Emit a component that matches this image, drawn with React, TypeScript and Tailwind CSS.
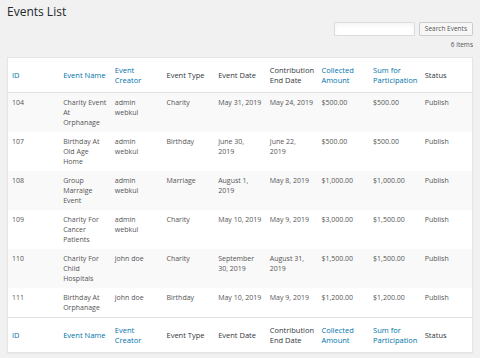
import React from 'react';

interface EventRow {
  id: string,
  name: string,
  creator: string,
  type: string,
  date: string,
  endDate: string,
  collected: string,
  sum: string,
  status: string,
}

const rows: EventRow[] = [
  {id: '104', name: 'Charity Event At Orphanage', creator: 'admin webkul', type: 'Charity', date: 'May 31, 2019', endDate: 'May 24, 2019', collected: '$500.00', sum: '$500.00', status: 'Publish'},
  {id: '107', name: 'Birthday At Old Age Home', creator: 'admin webkul', type: 'Birthday', date: 'June 30, 2019', endDate: 'June 22, 2019', collected: '$500.00', sum: '$500.00', status: 'Publish'},
  {id: '108', name: 'Group Marraige Event', creator: 'admin webkul', type: 'Marriage', date: 'August 1, 2019', endDate: 'May 8, 2019', collected: '$1,000.00', sum: '$1,000.00', status: 'Publish'},
  {id: '109', name: 'Charity For Cancer Patients', creator: 'admin webkul', type: 'Charity', date: 'May 10, 2019', endDate: 'May 9, 2019', collected: '$3,000.00', sum: '$1,500.00', status: 'Publish'},
  {id: '110', name: 'Charity For Child Hospitals', creator: 'john doe', type: 'Charity', date: 'September 30, 2019', endDate: 'August 31, 2019', collected: '$1,500.00', sum: '$1,500.00', status: 'Publish'},
  {id: '111', name: 'Birthday At Orphanage', creator: 'john doe', type: 'Birthday', date: 'May 10, 2019', endDate: 'May 9, 2019', collected: '$1,200.00', sum: '$1,200.00', status: 'Publish'},
];

const columns: { label: string, link: boolean }[] = [
  {label: 'ID', link: true},
  {label: 'Event Name', link: true},
  {label: 'Event Creator', link: true},
  {label: 'Event Type', link: false},
  {label: 'Event Date', link: false},
  {label: 'Contribution End Date', link: false},
  {label: 'Collected Amount', link: true},
  {label: 'Sum for Participation', link: true},
  {label: 'Status', link: false},
];

const HeaderRow = () => (
  <tr>
    {columns.map(col => (
      <th key={col.label}
          className={`h-[35px] px-[4px] text-left align-middle font-normal text-[7.5px] leading-[10px] ${col.link ? 'text-[#0073aa]' : 'text-[#32373c]'}`}>
        {col.label}
      </th>
    ))}
  </tr>
);

const App: React.FC = () => {
  return (
    <div className="w-[480px] h-[358px] bg-[#f1f1f1] px-[7px] pt-[5px] font-['Open_Sans',sans-serif] overflow-hidden">
      <h1 className="text-[12px] leading-[14px] text-[#23282d] font-normal">Events List</h1>

      <div className="flex justify-end items-center gap-[4px] mt-[3px]">
        <input type="text" className="w-[81px] h-[14px] bg-white border border-[#ddd] shadow-inner"/>
        <button type="button"
                className="h-[14px] px-[5px] bg-[#f7f7f7] border border-[#ccc] rounded-[2px] text-[6.5px] leading-[12px] text-[#555]">
          Search Events
        </button>
      </div>
      <div className="text-right text-[6.5px] leading-[10px] text-[#555] mt-[4px]">6 items</div>

      <table className="w-full table-fixed bg-white border border-[#e5e5e5] shadow-[0_1px_1px_rgba(0,0,0,0.04)] mt-[7px] border-collapse">
        <thead className="border-b border-[#e1e1e1]">
          <HeaderRow/>
        </thead>
        <tbody>
          {rows.map((row, i) => (
            <tr key={row.id} className={i % 2 === 0 ? 'bg-[#f9f9f9]' : 'bg-white'}>
              {[row.id, row.name, row.creator, row.type, row.date, row.endDate, row.collected, row.sum, row.status].map((v, j) => (
                <td key={j} className="px-[4px] pt-[5px] pb-[4px] align-top text-[7px] leading-[10px] text-[#555]">
                  {v}
                </td>
              ))}
            </tr>
          ))}
        </tbody>
        <tfoot className="border-t border-[#e1e1e1]">
          <HeaderRow/>
        </tfoot>
      </table>
    </div>
  );
};

export default App;
